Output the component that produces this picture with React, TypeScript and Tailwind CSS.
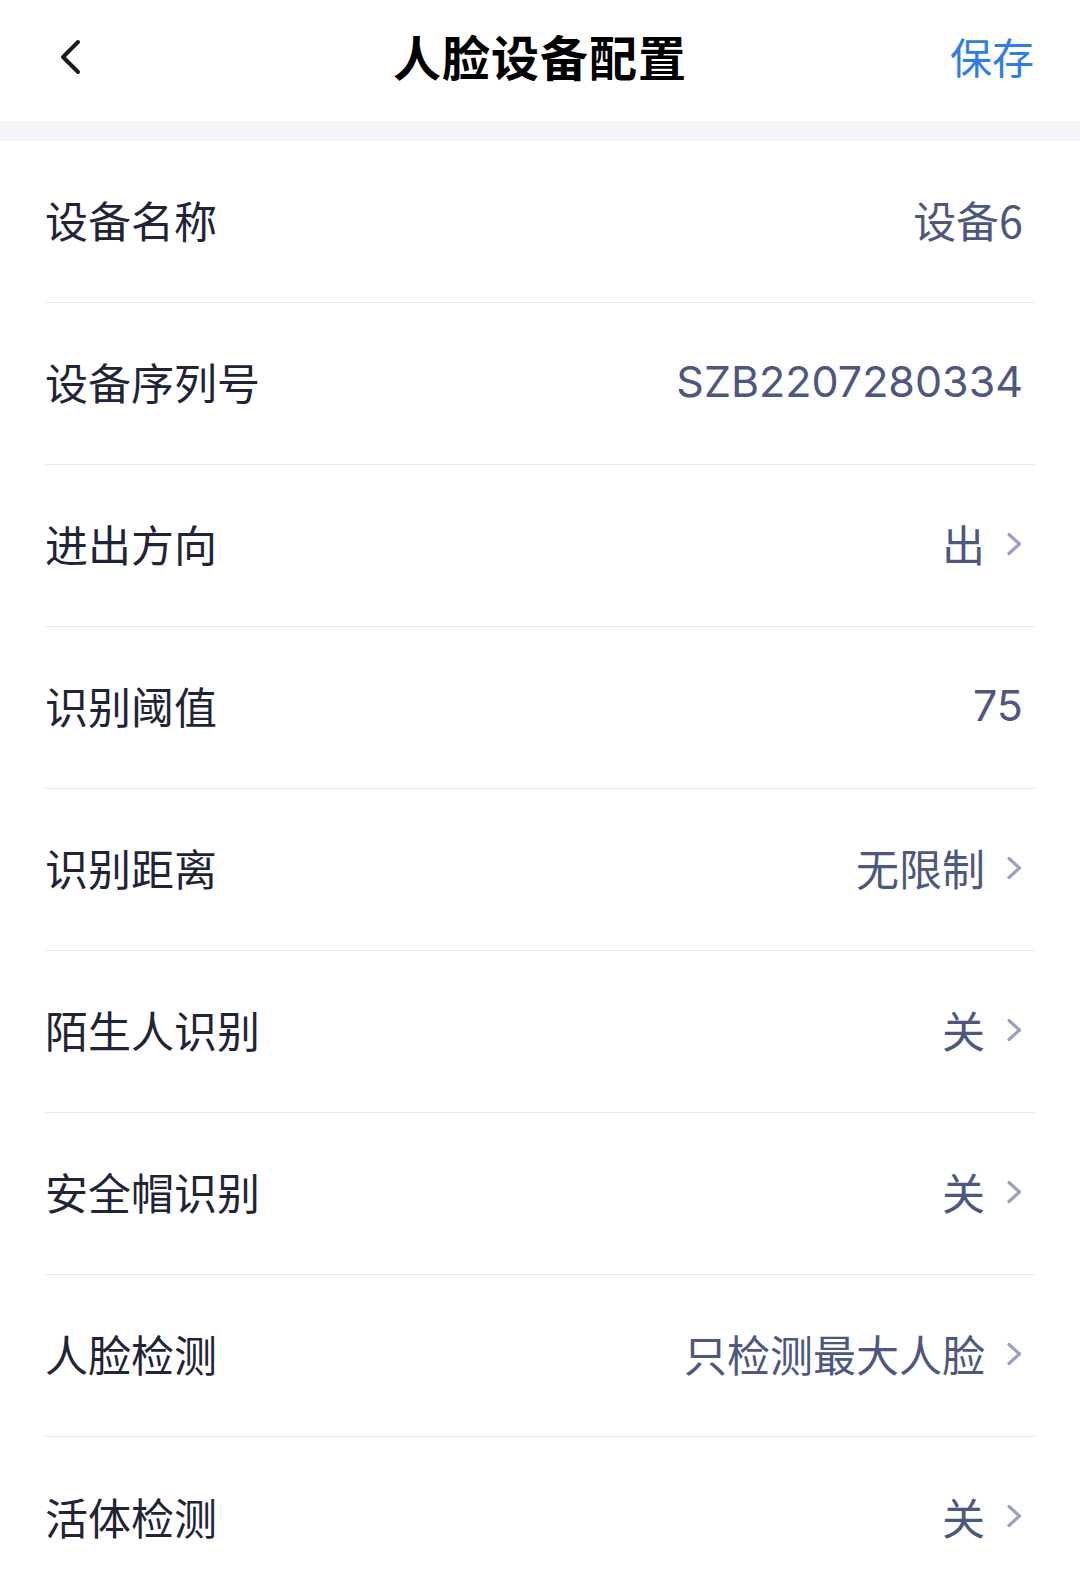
type Row = { label: string; value: string; arrow?: boolean; latin?: boolean };

const rows: Row[] = [
  { label: "设备名称", value: "设备6" },
  { label: "设备序列号", value: "SZB2207280334", latin: true },
  { label: "进出方向", value: "出", arrow: true },
  { label: "识别阈值", value: "75", latin: true },
  { label: "识别距离", value: "无限制", arrow: true },
  { label: "陌生人识别", value: "关", arrow: true },
  { label: "安全帽识别", value: "关", arrow: true },
  { label: "人脸检测", value: "只检测最大人脸", arrow: true },
  { label: "活体检测", value: "关", arrow: true },
];

const cjk = "font-['Noto_Sans_CJK_SC','Noto_Sans',sans-serif]";

function Chevron() {
  return (
    <svg width="18" height="26" viewBox="0 0 18 26" fill="none" className="ml-[20px]">
      <path d="M4 3.5 L14.5 13 L4 22.5" stroke="#9aa1bd" strokeWidth="3.2" strokeLinecap="round" strokeLinejoin="round" />
    </svg>
  );
}

function BackArrow() {
  return (
    <svg width="26" height="38" viewBox="0 0 26 38" fill="none" className="absolute left-[58px] top-[38px]">
      <path d="M20 4 L5 19 L20 34" stroke="#1c1c1c" strokeWidth="4" strokeLinecap="round" strokeLinejoin="round" />
    </svg>
  );
}

export default function App() {
  return (
    <div className={`w-[1080px] h-[1588px] overflow-hidden bg-white ${cjk}`}>
      {/* Header */}
      <div className="relative h-[121px] flex items-center justify-center pb-[12px]">
        <BackArrow />
        <h1 className="text-[48px] font-bold text-black leading-none tracking-[1px]">人脸设备配置</h1>
        <span className="absolute right-[46px] top-[35px] text-[42px] leading-none text-[#2e7ee6]">保存</span>
      </div>
      <div className="h-[20px] bg-[#f4f5f8]" />

      {/* Rows */}
      <div>
        {rows.map((r, i) => (
          <div
            key={r.label}
            className={`mx-[45px] h-[162px] flex items-center justify-between pr-[12px] ${i < rows.length - 1 ? "border-b border-[#e9eaee]" : ""}`}
          >
            <span className="text-[43px] leading-none text-[#1f2437] mt-[-4px]">{r.label}</span>
            <div className="flex items-center mt-[-4px]">
              <span
                className={`text-[43px] leading-none text-[#4d5780] ${r.latin ? "font-['Inter',sans-serif]" : ""}`}
              >
                {r.value}
              </span>
              {r.arrow && <Chevron />}
            </div>
          </div>
        ))}
      </div>
    </div>
  );
}
